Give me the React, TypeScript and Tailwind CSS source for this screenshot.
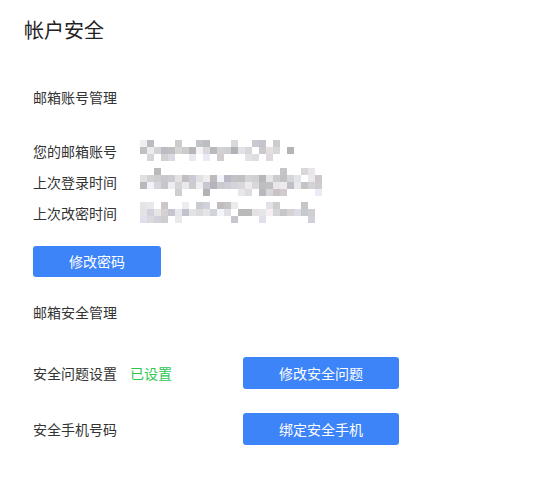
import React from "react";

// pixelated "blurred" value, drawn as blocks of 7px
const Mosaic: React.FC<{ cols: number; rows: number; seed: number }> = ({ cols, rows, seed }) => {
  let s = seed;
  const rnd = () => {
    s = (s * 9301 + 49297) % 233280;
    return s / 233280;
  };
  const cells: string[] = [];
  for (let r = 0; r < rows; r++) {
    for (let c = 0; c < cols; c++) {
      const edge = r === 0 || r === rows - 1;
      const empty = rnd() < (edge ? 0.7 : 0.06);
      if (empty) {
        cells.push("transparent");
        continue;
      }
      const l = 178 + Math.floor(rnd() * 66);
      const tint = Math.floor(rnd() * 3);
      const d = Math.floor(rnd() * 12) - 3;
      const rr = tint === 0 ? l + d : l;
      const gg = l;
      const bb = tint === 1 ? l + d + 4 : l + 3;
      cells.push(`rgb(${Math.min(rr, 250)},${Math.min(gg, 250)},${Math.min(bb, 252)})`);
    }
  }
  return (
    <div className="grid" style={{ gridTemplateColumns: `repeat(${cols}, 7px)` }}>
      {cells.map((bg, i) => (
        <div key={i} className="h-[7px] w-[7px]" style={{ background: bg }} />
      ))}
    </div>
  );
};

const InfoRow: React.FC<{ label: string; cols: number; rows: number; seed: number }> = ({ label, cols, rows, seed }) => (
  <div className="flex h-[31px] items-center">
    <span className="w-[107px] text-[14px] leading-5 text-[#333]">{label}</span>
    <Mosaic cols={cols} rows={rows} seed={seed} />
  </div>
);

const BlueButton: React.FC<{ title: string; className?: string }> = ({ title, className }) => (
  <button
    className={
      "flex items-center justify-center rounded-[3px] bg-[#3d84f8] text-[14px] text-white " + (className ?? "")
    }
  >
    {title}
  </button>
);

export default function App() {
  return (
    <div
      className="min-h-[478px] w-[552px] bg-white pt-[17px] text-[#333]"
      style={{ fontFamily: '"Noto Sans CJK SC", "Noto Sans", sans-serif' }}
    >
      <h1 className="pl-[24px] text-[20px] font-normal leading-[26px] text-[#222]">帐户安全</h1>

      <div className="pl-[33px]">
        {/* 账号 */}
        <div className="mt-[44px] text-[14px] leading-5">邮箱账号管理</div>
        <div className="mt-[28px] flex flex-col">
          <InfoRow label="您的邮箱账号" cols={22} rows={3} seed={17} />
          <InfoRow label="上次登录时间" cols={26} rows={4} seed={53} />
          <InfoRow label="上次改密时间" cols={25} rows={3} seed={91} />
        </div>
        <BlueButton title="修改密码" className="mt-[18px] h-[31px] w-[128px]" />

        {/* 安全 */}
        <div className="mt-[25px] text-[14px] leading-5">邮箱安全管理</div>
        <div className="mt-[35px] flex items-center">
          <div className="flex w-[210px] items-center text-[14px] leading-5">
            <span className="w-[97px]">安全问题设置</span>
            <span className="text-[#2dc653]">已设置</span>
          </div>
          <BlueButton title="修改安全问题" className="h-[32px] w-[156px]" />
        </div>
        <div className="mt-[24px] flex items-center">
          <div className="w-[210px] text-[14px] leading-5">安全手机号码</div>
          <BlueButton title="绑定安全手机" className="h-[32px] w-[156px]" />
        </div>
      </div>
    </div>
  );
}
